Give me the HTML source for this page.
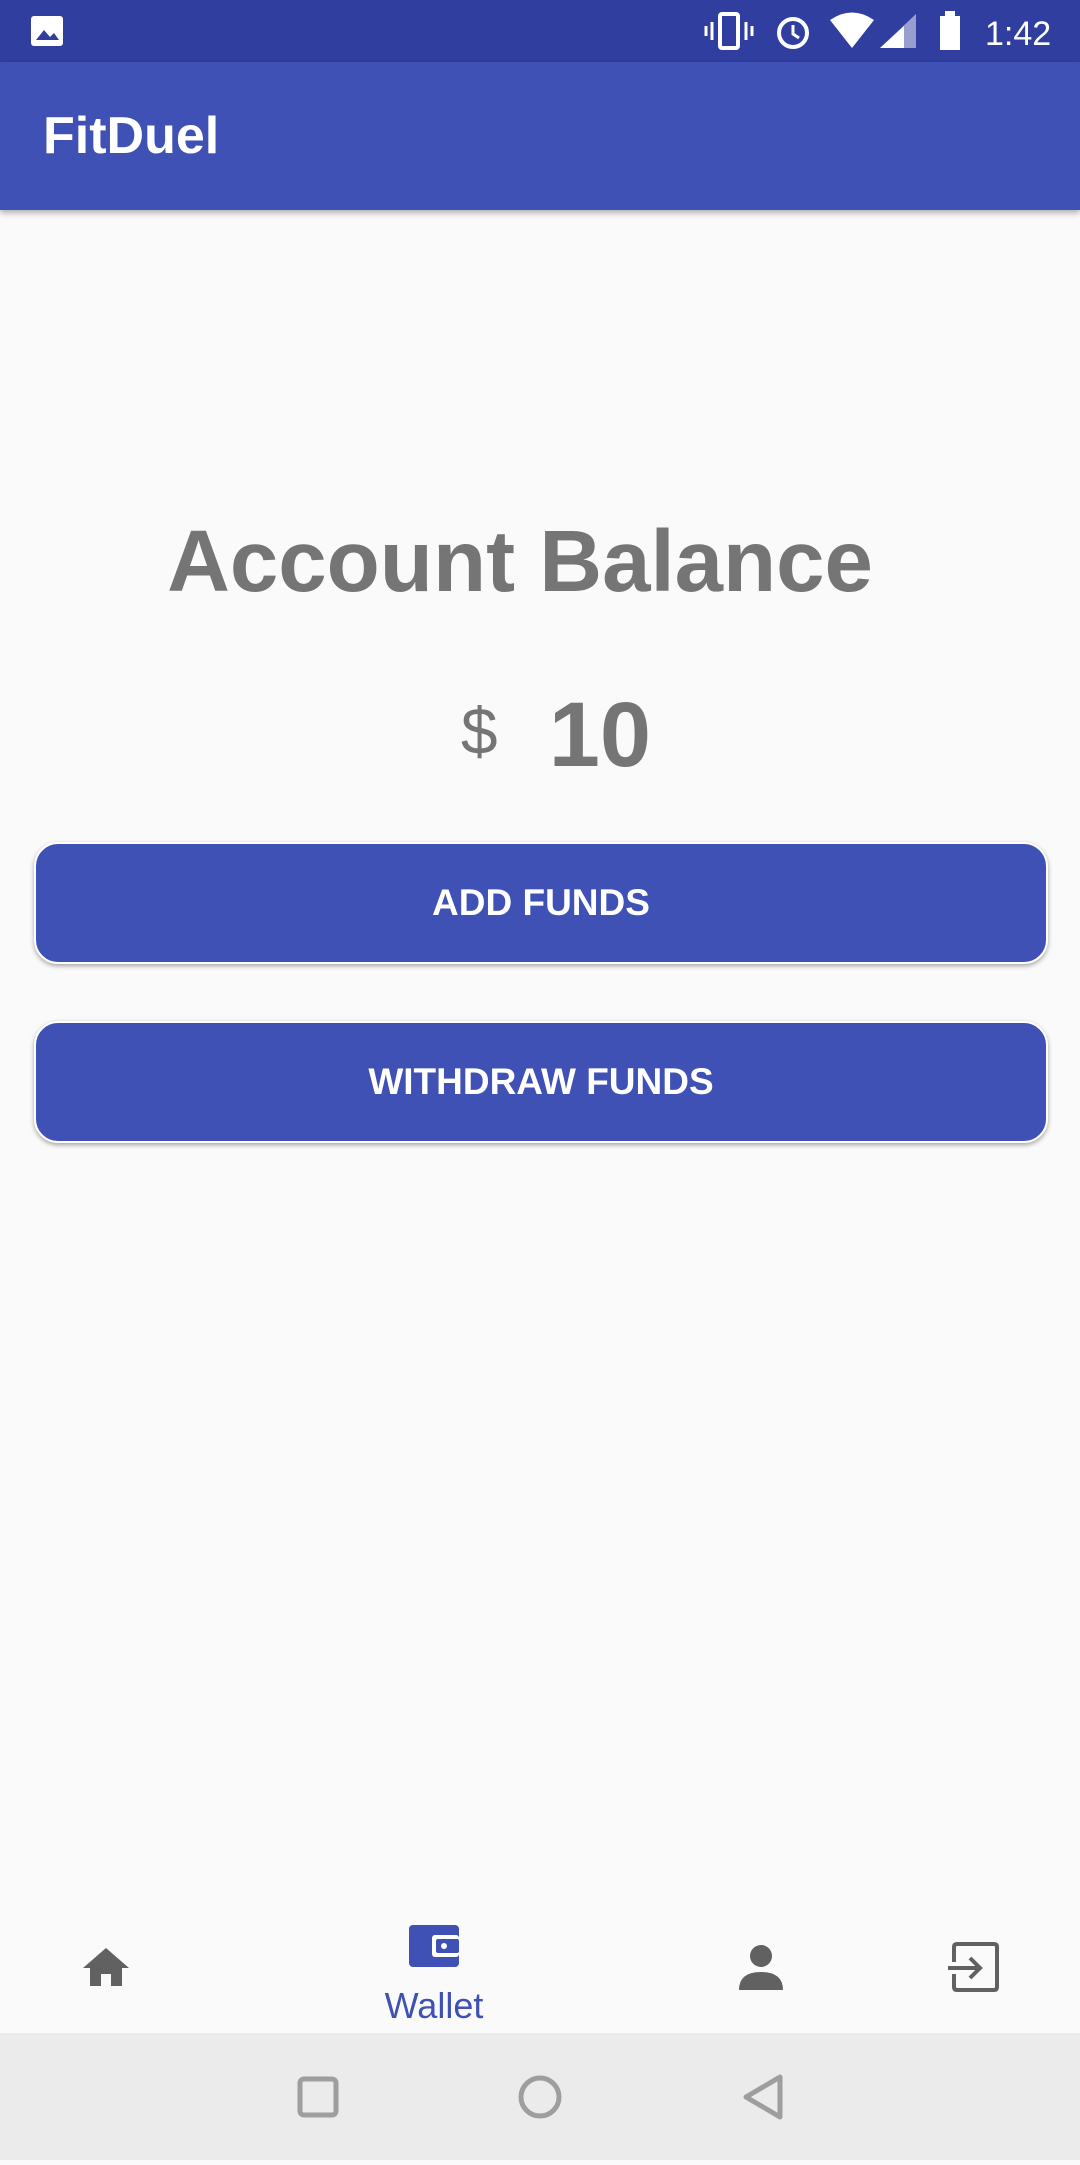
<!DOCTYPE html>
<html><head><meta charset="utf-8"><style>
*{margin:0;padding:0;box-sizing:border-box}
body{width:1080px;height:2160px;background:#fafafa;font-family:"Liberation Sans",sans-serif;position:relative;overflow:hidden}
.status{position:absolute;top:0;left:0;width:1080px;height:62px;background:#303f9f}
.bar{position:absolute;top:62px;left:0;width:1080px;height:148px;background:#3f51b5;box-shadow:0 3px 6px rgba(0,0,0,.3)}
.bar span{position:absolute;left:43px;top:44px;color:#fff;font-size:52px;font-weight:bold}
.t{position:absolute;width:1080px;text-align:center;color:#757575;font-weight:bold}
.btn{position:absolute;left:34px;width:1014px;height:122px;background:#3f51b5;border-radius:24px;border:2px solid #fff;box-shadow:0 2px 5px rgba(0,0,0,.35);color:#fff;font-weight:bold;font-size:37px;text-align:center;line-height:118px}
.nav{position:absolute;top:2033px;left:0;width:1080px;height:127px;background:#ebebeb}
</style></head><body>
<div class="status">
<svg width="1080" height="62" style="position:absolute;left:0;top:0">
<rect x="31" y="16" width="32" height="30" rx="3" fill="#fff"/><path d="M36 40 L44 30 L50 37 L54 33 L59 40Z" fill="#303f9f"/>
<rect x="720" y="14" width="18" height="34" rx="2" fill="none" stroke="#fff" stroke-width="4"/><path d="M712 22v18M746 22v18M706 26v10M752 26v10" stroke="#fff" stroke-width="3"/>
<circle cx="793" cy="33" r="14" fill="none" stroke="#fff" stroke-width="4"/><path d="M793 25v9l6 4" stroke="#fff" stroke-width="3" fill="none"/>
<path d="M830 20 Q852 5 874 20 L852 48Z" fill="#fff"/>
<path d="M880 48 L916 14 L916 48Z" fill="#fff" opacity=".5"/><path d="M880 48 L904 26 L904 48Z" fill="#fff"/>
<rect x="940" y="16" width="20" height="34" fill="#fff"/><rect x="945" y="11" width="10" height="6" fill="#fff"/>
<text x="985" y="45" fill="#fff" font-size="34" font-family="Liberation Sans">1:42</text>
</svg></div>
<div class="bar"><span>FitDuel</span></div>
<div class="t" style="top:512px;font-size:87px;left:-20px">Account Balance</div>
<div class="t" style="top:683px;font-size:92px;left:16px">
<span style="font-size:66px;font-weight:normal;position:relative;top:-12px">$</span>&nbsp;&nbsp;10</div>
<div class="btn" style="top:842px">ADD FUNDS</div>
<div class="btn" style="top:1021px">WITHDRAW FUNDS</div>
<svg width="1080" height="130" style="position:absolute;left:0;top:1910px">
<path d="M106 38 L83 58 H90 V76 H101 V64 H111 V76 H122 V58 H129Z" fill="#616161"/>
<rect x="409" y="15" width="50" height="42" rx="4" fill="#3f51b5"/><rect x="432" y="25" width="27" height="22" rx="3" fill="#fff"/><rect x="436" y="29" width="23" height="14" rx="2" fill="#3f51b5"/><circle cx="444" cy="36" r="3" fill="#fff"/>
<text x="434" y="108" fill="#3f51b5" font-size="36" text-anchor="middle" font-family="Liberation Sans">Wallet</text>
<circle cx="761" cy="46" r="11" fill="#616161"/><path d="M739 80 Q739 62 761 62 Q783 62 783 80Z" fill="#616161"/>
<path d="M954 52 V37 Q954 34 957 34 H994 Q997 34 997 37 V77 Q997 80 994 80 H957 Q954 80 954 77 V64" fill="none" stroke="#616161" stroke-width="4"/>
<path d="M948 58 H979 M970 48 L980 58 L970 68" fill="none" stroke="#616161" stroke-width="4"/>
</svg>
<div class="nav"><svg width="1080" height="127">
<rect x="300" y="46" width="36" height="36" rx="4" fill="none" stroke="#9e9e9e" stroke-width="5"/>
<circle cx="540" cy="64" r="19" fill="none" stroke="#9e9e9e" stroke-width="5"/>
<path d="M780 44 L746 64 L780 84Z" fill="none" stroke="#9e9e9e" stroke-width="5" stroke-linejoin="round"/>
</svg></div>
</body></html>
